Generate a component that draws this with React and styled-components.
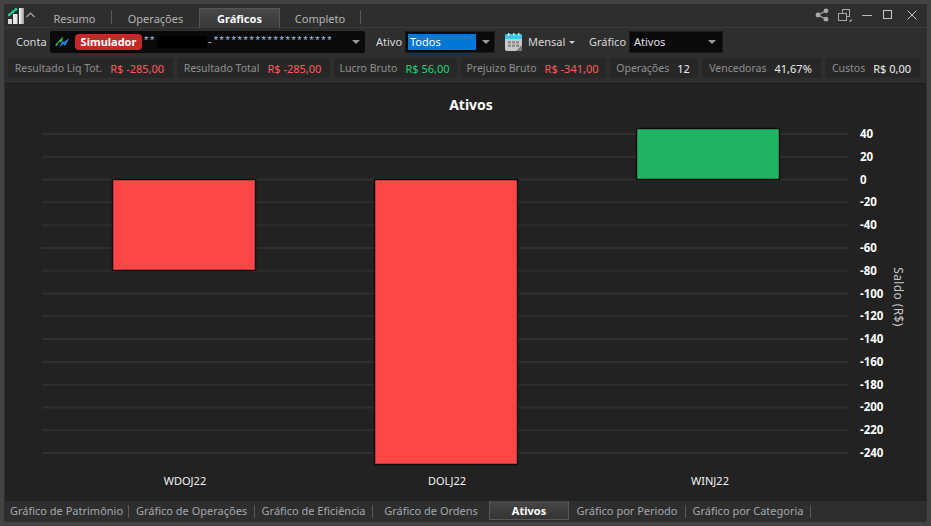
import React from "react";
import styled, { createGlobalStyle } from "styled-components";

const Global = createGlobalStyle`
  html, body { margin: 0; padding: 0; background: #434343; }
  body { width: 931px; height: 526px; overflow: hidden; font-family: "Noto Sans", "Open Sans", sans-serif; }
  * { box-sizing: border-box; }
`;

const Screen = styled.div`
  width: 931px; height: 526px; padding: 4px 4px 4px 4px; background: #434343;
`;
const Win = styled.div`
  width: 923px; height: 518px; background: #2e2e2e; display: flex; flex-direction: column;
`;
const TitleBar = styled.div`
  height: 24px; display: flex; align-items: flex-end; border-bottom: 1px solid #3a3a3a; position: relative;
`;
const Brand = styled.div`
  width: 41px; height: 24px; padding-left: 4px; display: flex; align-items: center; flex: none;
`;
const Tab = styled.div`
  width: ${p => p.$w}px; height: 20px; display: flex; align-items: center; justify-content: center; flex: none;
  font-size: 11px; line-height: 20px; margin-bottom: -1px;
  padding: 1px ${p => p.$pr || 0}px 0 0;
  color: ${p => (p.$active ? "#ffffff" : "#b4b4b4")};
  font-weight: ${p => (p.$active ? 700 : 400)};
  background: ${p => (p.$active ? "linear-gradient(#484848, #383838)" : "transparent")};
  border: ${p => (p.$active ? "1px solid #565656" : "none")};
  border-bottom: none;
`;
const TabSep = styled.div`
  width: 1px; height: 14px; margin-bottom: 3px; background: #5a5a5a; flex: none;
`;
const WinButtons = styled.div`
  margin-left: auto; height: 24px; display: flex; align-items: center; gap: 0; padding-right: 3px;
`;
const WinBtn = styled.div`
  width: ${p => p.$w}px; height: 24px; display: flex; align-items: center; justify-content: center;
`;
const Toolbar = styled.div`
  height: 28px; display: flex; align-items: center; padding-left: 12px; flex: none; font-size: 11px; color: #d8d8d8;
`;
const Label = styled.span`
  width: ${p => p.$w}px; padding-left: ${p => p.$pl || 0}px; flex: none; white-space: nowrap; line-height: 16px;
`;
const Account = styled.div`
  width: 315px; height: 22px; background: #0a0a0a; border-radius: 2px; display: flex; align-items: center; padding-left: 4px; flex: none; position: relative;
`;
const Badge = styled.span`
  width: 67px; height: 16px; margin-left: 5px; background: #c62828; border-radius: 4px; color: #fff; font-weight: 700; font-size: 11px;
  line-height: 15px; text-align: center; flex: none;
`;
const Stars = styled.span`
  color: #a9c6e6; font-size: 11px; font-family: "Liberation Sans", sans-serif; line-height: 14px; height: 14px; white-space: nowrap; flex: none;
  letter-spacing: ${p => p.$ls || 0}px; margin-top: ${p => p.$mt}px; margin-left: ${p => p.$ml}px;
`;
const Redacted = styled.span`
  width: 50px; height: 12px; background: #000; flex: none; margin-left: 1px;
`;
const Caret = styled.span`
  position: absolute; right: ${p => p.$r}px; top: 50%; margin-top: -2px; width: 0; height: 0;
  border-left: 4px solid transparent; border-right: 4px solid transparent; border-top: 4px solid #9a9a9a;
`;
const Select = styled.div`
  width: ${p => p.$w}px; height: 22px; flex: none; background: #0a0a0a; border: 1px solid #1c1c1c; position: relative; padding: 2px;
  display: flex; align-items: center; font-size: 11px; color: #e0e0e0;
`;
const SelectText = styled.span`
  width: ${p => p.$w}px; height: 16px; line-height: 15px; padding-left: ${p => p.$pl}px; flex: none;
  background: ${p => (p.$sel ? "#0078d7" : "transparent")}; color: ${p => (p.$sel ? "#fff" : "#e0e0e0")};
`;
const MiniCaret = styled.span`
  flex: none; width: 0; height: 0; margin: 0 ${p => p.$mr}px 0 7px;
  border-left: 3.5px solid transparent; border-right: 3.5px solid transparent; border-top: 3.5px solid #d0d0d0;
`;
const CalIcon = styled.svg`
  flex: none; margin: 0 5px 0 10px;
`;
const BoltIcon = styled.svg`
  flex: none;
`;
const Stats = styled.div`
  height: 27px; display: flex; align-items: flex-start; gap: 4px; padding: 2px 0 0 4px; flex: none;
`;
const Chip = styled.div`
  width: ${p => p.$w}px; height: 20px; flex: none; background: #272727; border-radius: 2px; display: flex; align-items: center; justify-content: center;
  padding-right: 2px; gap: 8px; font-size: 10.5px; color: #8f8f8f; white-space: nowrap;
`;
const Val = styled.span`
  color: ${p => p.$c}; font-size: 11px;
`;
const Chart = styled.div`
  flex: 1; min-height: 0; margin: 0 1px 0 1px; background: #222222; border-top: 1px solid #1b1b1b;
`;
const ChartSvg = styled.svg`
  display: block;
`;
const BottomBar = styled.div`
  height: 21px; flex: none; display: flex; align-items: flex-start; background: #2e2e2e; padding-left: 1px;
`;
const BTab = styled.div`
  width: ${p => p.$w}px; height: 19px; flex: none; text-align: center; font-size: 11px; line-height: 19px; white-space: nowrap;
  color: ${p => (p.$active ? "#fff" : "#a4a8ad")}; font-weight: ${p => (p.$active ? 700 : 400)};
  background: ${p => (p.$active ? "linear-gradient(#474747, #343434)" : "transparent")};
  border: ${p => (p.$active ? "1px solid #585858" : "none")}; border-top: none;
`;
const BSep = styled.div`
  width: 1px; height: 13px; margin-top: 4px; background: #5a5a5a; flex: none;
`;

const ticks = [40, 20, 0, -20, -40, -60, -80, -100, -120, -140, -160, -180, -200, -220, -240];
const yOf = (v, i) => 50 + i * 22.79;
const bars = [
  { x: 107, y: 95, w: 143, h: 91, c: "#ff4747" },
  { x: 369, y: 95, w: 143, h: 285, c: "#ff4747" },
  { x: 631, y: 44, w: 143, h: 51, c: "#1fb463" },
];
const names = [["WDOJ22", 180], ["DOLJ22", 442], ["WINJ22", 705]];

const Logo = () => (
  <svg width="30" height="18" viewBox="0 0 30 18">
    <defs>
      <linearGradient id="lg" x1="0" y1="0" x2="1" y2="0"><stop offset="0" stopColor="#fff" /><stop offset="1" stopColor="#9a9a9a" /></linearGradient>
    </defs>
    <rect x="0" y="13" width="4" height="5" fill="#d8d8d8" />
    <rect x="5" y="8" width="4.5" height="10" fill="#e8e8e8" />
    <rect x="11" y="2" width="5" height="16" fill="url(#lg)" />
    <path d="M1 9 L8 3.5" stroke="#16d49a" strokeWidth="1.8" fill="none" />
    <circle cx="1.2" cy="8.8" r="1.4" fill="#16d49a" />
    <circle cx="4.8" cy="6" r="1.4" fill="#16d49a" />
    <circle cx="8" cy="3.4" r="1.4" fill="#16d49a" />
    <path d="M18.5 11 L22.5 7 L26.5 11" stroke="#a8a8a8" strokeWidth="1.2" fill="none" />
  </svg>
);
const Share = () => (
  <svg width="14" height="14" viewBox="0 0 14 14" fill="#a8a8a8"><circle cx="3" cy="7" r="2.4" /><circle cx="11" cy="2.8" r="2.4" /><circle cx="11" cy="11.2" r="2.4" /><path d="M3 7L11 2.8M3 7l8 4.2" stroke="#a8a8a8" strokeWidth="1.2" /></svg>
);
const Restore = () => (
  <svg width="14" height="13" viewBox="0 0 14 13" fill="none" stroke="#a8a8a8"><rect x="4.5" y=".5" width="7" height="7" /><rect x=".5" y="4.5" width="8" height="7" fill="#2e2e2e" /><path d="M11 12.5h2.5V10z" fill="#c8c8c8" stroke="none" /></svg>
);
const Min = () => <svg width="12" height="12" viewBox="0 0 12 12"><path d="M1 6.5h10" stroke="#b8b8b8" /></svg>;
const Max = () => <svg width="10" height="10" viewBox="0 0 10 10" fill="none"><rect x=".5" y=".5" width="8" height="8" stroke="#c8c8c8" /></svg>;
const Close = () => <svg width="10" height="10" viewBox="0 0 10 10"><path d="M.5.5l9 9M9.5.5l-9 9" stroke="#c0c0c0" /></svg>;
const Bolt = () => (
  <BoltIcon width="16" height="14" viewBox="0 0 16 14">
    <path d="M1 10 L9 1.5 L8 6.5 L4.5 7.5 L3 11z" fill="#45c24a" />
    <path d="M5 12.5 L8.5 6 L10 7 L15.5 3 L11 11 L9.5 9z" fill="#1e88e5" />
  </BoltIcon>
);
const Cal = () => (
  <CalIcon width="18" height="18" viewBox="0 0 18 18">
    <rect x="0" y="1" width="17" height="17" rx="2" fill="#c8c8c8" />
    <path d="M0 3a2 2 0 012-2h13a2 2 0 012 2v3H0z" fill="#3cc4ee" />
    <rect x="3" y="0" width="1.4" height="3" fill="#e8f4fa" /><rect x="8" y="0" width="1.4" height="3" fill="#e8f4fa" /><rect x="13" y="0" width="1.4" height="3" fill="#e8f4fa" />
    <path d="M3 8h3v2.5H3zM7 8h3v2.5H7zM11 8h3v2.5h-3zM3 11.5h3V14H3zM7 11.5h3V14H7zM11 11.5h3V14h-3z" fill="#8e8e8e" />
    <path d="M17 12v4a2 2 0 01-2 2h-4z" fill="#7a7a7a" />
  </CalIcon>
);

export default function App() {
  return (
    <Screen>
      <Global />
      <Win>
        <TitleBar>
          <Brand><Logo /></Brand>
          <Tab $w={66} $pr={7}>Resumo</Tab>
          <TabSep />
          <Tab $w={87}>Operações</Tab>
          <Tab $w={81} $active>Gráficos</Tab>
          <Tab $w={80}>Completo</Tab>
          <TabSep />
          <WinButtons>
            <WinBtn $w={17}><Share /></WinBtn>
            <WinBtn $w={29}><Restore /></WinBtn>
            <WinBtn $w={16}><Min /></WinBtn>
            <WinBtn $w={25}><Max /></WinBtn>
            <WinBtn $w={24}><Close /></WinBtn>
          </WinButtons>
        </TitleBar>
        <Toolbar>
          <Label $w={34}>Conta</Label>
          <Account>
            <Bolt />
            <Badge>Simulador</Badge>
            <Stars $ml={2} $mt={-5} $ls={1.7}>**</Stars>
            <Redacted />
            <Stars $ml={1} $mt={-2}>-</Stars>
            <Stars $ml={2} $mt={-5} $ls={1.7}>********************</Stars>
            <Caret $r={5} />
          </Account>
          <Label $w={40} $pl={11}>Ativo</Label>
          <Select $w={90}>
            <SelectText $sel $w={68} $pl={2}>Todos</SelectText>
            <Caret $r={4} />
          </Select>
          <Cal />
          <Label $w={34}>Mensal</Label>
          <MiniCaret $mr={14} />
          <Label $w={40}>Gráfico</Label>
          <Select $w={94}>
            <SelectText $w={70} $pl={2}>Ativos</SelectText>
            <Caret $r={6} />
          </Select>
        </Toolbar>
        <Stats>
          <Chip $w={165}>Resultado Liq Tot.<Val $c="#ff5a5a">R$ -285,00</Val></Chip>
          <Chip $w={153}>Resultado Total<Val $c="#ff5a5a">R$ -285,00</Val></Chip>
          <Chip $w={123}>Lucro Bruto<Val $c="#25d07a">R$ 56,00</Val></Chip>
          <Chip $w={145}>Prejuizo Bruto<Val $c="#ff5a5a">R$ -341,00</Val></Chip>
          <Chip $w={88}>Operações<Val $c="#eeeeee">12</Val></Chip>
          <Chip $w={119}>Vencedoras<Val $c="#eeeeee">41,67%</Val></Chip>
          <Chip $w={95}>Custos<Val $c="#eeeeee">R$ 0,00</Val></Chip>
        </Stats>
        <Chart>
          <ChartSvg width="921" height="418" viewBox="0 0 921 418" fontFamily="'Noto Sans', sans-serif">
            <text x="466" y="26" fill="#fff" fontSize="14" fontWeight="700" textAnchor="middle">Ativos</text>
            {ticks.map((t, i) => (
              <g key={t}>
                <line x1="37" x2="844" y1={yOf(t, i)} y2={yOf(t, i)} stroke="#2f2f2f" strokeWidth="2" />
                <text x="855" y={yOf(t, i) + 4} fill="#fff" fontSize="11.5" fontWeight="700">{t}</text>
              </g>
            ))}
            {bars.map(b => (
              <rect key={b.x} x={b.x + 0.5} y={b.y + 0.5} width={b.w} height={b.h} fill={b.c} stroke="#0d0d0d" strokeWidth="1.5" />
            ))}
            {names.map(([n, x]) => (
              <text key={n} x={x} y="401" fill="#f2f2f2" fontSize="11" textAnchor="middle">{n}</text>
            ))}
            <text transform="translate(889 213) rotate(90)" fill="#c8c8c8" fontSize="12" letterSpacing="0.4" textAnchor="middle">Saldo (R$)</text>
          </ChartSvg>
        </Chart>
        <BottomBar>
          <BTab $w={123}>Gráfico de Patrimônio</BTab><BSep />
          <BTab $w={125}>Gráfico de Operações</BTab><BSep />
          <BTab $w={117}>Gráfico de Eficiência</BTab><BSep />
          <BTab $w={116}>Gráfico de Ordens</BTab>
          <BTab $w={80} $active>Ativos</BTab>
          <BTab $w={116}>Gráfico por Periodo</BTab><BSep />
          <BTab $w={124}>Gráfico por Categoria</BTab><BSep />
        </BottomBar>
      </Win>
    </Screen>
  );
}
